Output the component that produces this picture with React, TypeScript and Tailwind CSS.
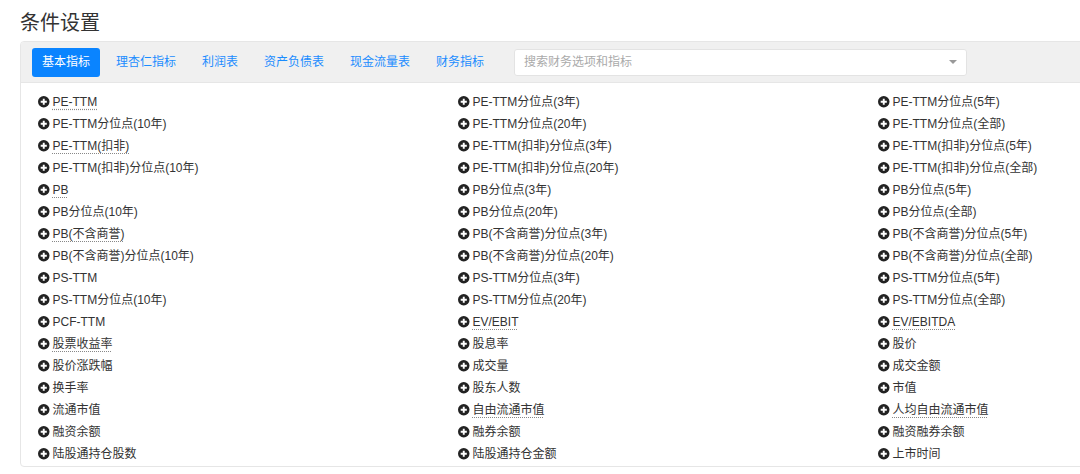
import React from 'react'

const tabs = ['基本指标', '理杏仁指标', '利润表', '资产负债表', '现金流量表', '财务指标']

// [label, dotted underline]
const items: [string, boolean][] = [
  ['PE-TTM', true], ['PE-TTM分位点(3年)', false], ['PE-TTM分位点(5年)', false],
  ['PE-TTM分位点(10年)', false], ['PE-TTM分位点(20年)', false], ['PE-TTM分位点(全部)', false],
  ['PE-TTM(扣非)', true], ['PE-TTM(扣非)分位点(3年)', false], ['PE-TTM(扣非)分位点(5年)', false],
  ['PE-TTM(扣非)分位点(10年)', false], ['PE-TTM(扣非)分位点(20年)', false], ['PE-TTM(扣非)分位点(全部)', false],
  ['PB', true], ['PB分位点(3年)', false], ['PB分位点(5年)', false],
  ['PB分位点(10年)', false], ['PB分位点(20年)', false], ['PB分位点(全部)', false],
  ['PB(不含商誉)', true], ['PB(不含商誉)分位点(3年)', false], ['PB(不含商誉)分位点(5年)', false],
  ['PB(不含商誉)分位点(10年)', false], ['PB(不含商誉)分位点(20年)', false], ['PB(不含商誉)分位点(全部)', false],
  ['PS-TTM', false], ['PS-TTM分位点(3年)', false], ['PS-TTM分位点(5年)', false],
  ['PS-TTM分位点(10年)', false], ['PS-TTM分位点(20年)', false], ['PS-TTM分位点(全部)', false],
  ['PCF-TTM', false], ['EV/EBIT', true], ['EV/EBITDA', true],
  ['股票收益率', true], ['股息率', false], ['股价', false],
  ['股价涨跌幅', false], ['成交量', false], ['成交金额', false],
  ['换手率', false], ['股东人数', false], ['市值', false],
  ['流通市值', false], ['自由流通市值', true], ['人均自由流通市值', true],
  ['融资余额', false], ['融券余额', false], ['融资融券余额', false],
  ['陆股通持仓股数', false], ['陆股通持仓金额', false], ['上市时间', false],
]

function PlusCircle() {
  return (
    <svg width="11.5" height="11.5" viewBox="0 0 12 12" className="shrink-0">
      <circle cx="6" cy="6" r="6" fill="#222" />
      <path d="M6 2.8v6.4M2.8 6h6.4" stroke="#fff" strokeWidth="2" />
    </svg>
  )
}

export default function App() {
  return (
    <div
      className="w-[1080px] h-[474px] overflow-hidden bg-white pl-[20px] text-[#333]"
      style={{ fontFamily: '"Liberation Sans", "Noto Sans CJK SC", sans-serif' }}
    >
      <h1 className="pt-[9px] h-[41px] text-[20px] leading-[28px] text-[#333]">条件设置</h1>
      <div className="w-[1296px] h-[426px] border border-[#e6e6e6] rounded-[4px] overflow-hidden">
        <div className="h-[41px] bg-[#f0f0f0] border-b border-[#e6e6e6] flex items-center pl-[11px] gap-[6px]">
          {tabs.map((t, i) => (
            <button
              key={t}
              className={`h-[29px] px-[10px] rounded-[3px] text-[12px] ${
                i === 0 ? 'bg-[#0a84ff] text-white' : 'text-[#1a8cff]'
              }`}
            >
              {t}
            </button>
          ))}
          <div className="ml-[14px] w-[453px] h-[27px] bg-white border border-[#e3e3e3] rounded-[3px] flex items-center justify-between px-[9px]">
            <span className="text-[12px] text-[#aaa]">搜索财务选项和指标</span>
            <span className="w-0 h-0 border-x-[4px] border-x-transparent border-t-[4px] border-t-[#999]" />
          </div>
        </div>
        <div className="grid grid-cols-[420px_420px_420px] pl-[17px] pt-[8px]">
          {items.map(([label, dotted]) => (
            <div key={label} className="h-[22px] flex items-center gap-[3px] text-[12px]">
              <PlusCircle />
              <span
                className={
                  dotted ? 'underline decoration-dotted decoration-[#888] underline-offset-[3px]' : ''
                }
              >
                {label}
              </span>
            </div>
          ))}
        </div>
      </div>
    </div>
  )
}
